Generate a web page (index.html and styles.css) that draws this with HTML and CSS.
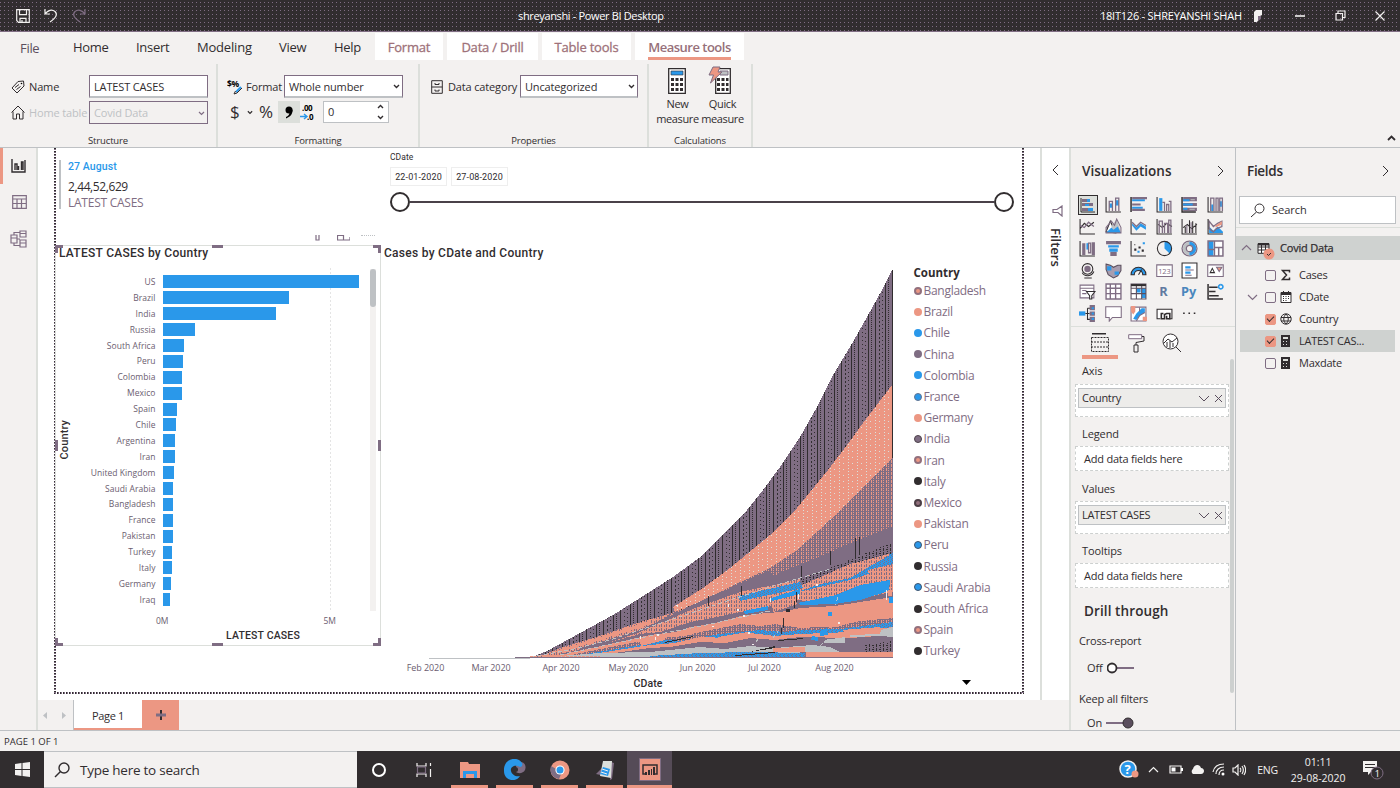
FILE: index.html
```html
<!DOCTYPE html>
<html lang="en">
<head>
<meta charset="utf-8">
<title>shreyanshi - Power BI Desktop</title>
<link rel="stylesheet" href="styles.css">
</head>
<body>
<div class="app">
  <header class="titlebar">
    <div class="quick">
      <svg width="14" height="14" viewBox="0 0 14 14"><path class="lw" d="M.7.7h12.6v12.6H2.5L.7 11.500zM3.500.7v5h7v-5M4 13.300v-4h6v4M6 11v2"/></svg>
      <svg width="14" height="15" viewBox="0 0 14 15"><path class="lw" d="M1 1v5h5M1 6C4 2 8 1 11 3.500c3 3 1 6-5 10.500"/></svg>
      <svg width="14" height="15" viewBox="0 0 14 15"><path class="lp" d="M13 1v5H8M13 6C10 2 6 1 3 3.500c-3 3-1 6 5 10.500"/></svg>
    </div>
    <div class="doc-name">shreyanshi - Power BI Desktop</div>
    <div class="account">18IT126 - SHREYANSHI SHAH</div>
    <div class="window-controls">
      <svg width="10" height="14" viewBox="0 0 10 14"><path fill="#f3f1f0" d="M1 3l2-2h6v5L7 7v2L4 13H1z"/><path fill="#7f6d83" d="M5 7h3v3l-3 2z"/></svg>
      <svg width="10" height="10" viewBox="0 0 10 10"><path class="lw2" d="M0 5h10"/></svg>
      <svg width="11" height="11" viewBox="0 0 11 11"><path class="lw" d="M1 3.500h6.500V10H1zM3 3.500V1h7v6.500H7.500"/></svg>
      <svg width="10" height="10" viewBox="0 0 10 10"><path class="lw" d="M.5.5l9 9M9.500.5l-9 9"/></svg>
    </div>
  </header>

  <nav class="tabs">
    <span class="tab file">File</span><span class="tab home">Home</span><span class="tab insert">Insert</span><span class="tab modeling">Modeling</span><span class="tab view">View</span><span class="tab help">Help</span>
    <span class="ctx format">Format</span><span class="ctx drill">Data / Drill</span><span class="ctx table">Table tools</span><span class="ctx measure"><b>Measure tools</b></span>
  </nav>

  <section class="ribbon">
    <div class="group structure">
      <div class="fields-grid">
        <svg width="14" height="14" viewBox="0 0 14 14"><path class="ld" d="M7 1.500l5.500-.5.500 5-7 7-5-5zM4 7.500l4-3M5.500 9.500l4-3"/><circle cx="10.500" cy="3.500" r=".8"/></svg>
        <span class="lbl">Name</span><span class="input">LATEST CASES</span>
        <svg width="14" height="15" viewBox="0 0 14 15"><path class="ld" d="M.5 7.500L7 1l6.500 6.500M2 6.500V14h3.500V9h3v5H12V6.500"/></svg>
        <span class="lbl off">Home table</span><span class="input off purple">Covid Data<svg width="7" height="5" viewBox="0 0 7 5"><path class="lp" d="M1 1l2.500 2.500L6 1"/></svg></span>
      </div>
      <div class="caption">Structure</div>
    </div>
    <div class="group formatting">
      <div class="fmt-row">
        <svg width="16" height="17" viewBox="0 -2 16 17"><text class="tiny-bold" x="0" y="7">$%</text><path stroke="#2a98ea" stroke-width="2" d="M14 7l-5 5"/><path class="ld" d="M8.500 11l-1.500 3 3-1 5-5"/></svg>
        <span class="lbl">Format</span><span class="input select">Whole number<svg width="7" height="5" viewBox="0 0 7 5"><path class="ld2" d="M1 1l2.500 2.500L6 1"/></svg></span>
      </div>
      <div class="num-row">
        <span class="sym dollar">$</span><svg width="6" height="5" viewBox="0 0 7 5"><path class="ld2" d="M1 1l2.500 2.500L6 1"/></svg>
        <span class="sym percent">%</span>
        <span class="comma"><svg width="8" height="13" viewBox="0 0 8 13"><circle cx="4" cy="4" r="3.500"/><path d="M7.500 3.500C8 8 5 11 1 12.500V11c2-1 3.500-2 3.500-5z"/></svg></span>
        <svg width="16" height="20" viewBox="0 0 16 20"><text class="dec" x="2" y="9">.00</text><text class="dec" x="7" y="17.500">.0</text><path stroke="#2a98ea" fill="none" stroke-width="1.400" d="M0 14.500h7M4 12l3 2.500L4 17"/></svg>
        <span class="stepper">0<svg width="7" height="16" viewBox="0 0 7 16"><path class="ld2" d="M1 4l2.500-2.500L6 4M1 12l2.500 2.500L6 12"/></svg></span>
      </div>
      <div class="caption">Formatting</div>
    </div>
    <div class="group properties">
      <div class="fmt-row">
        <svg width="12" height="14" viewBox="0 0 12 14"><path class="ld" d="M.7.7h10.600v12.600H.7zM.7 7h10.600M4 3v1.500h4V3M4 9.500V11h4V9.500"/></svg>
        <span class="lbl">Data category</span><span class="input select">Uncategorized<svg width="7" height="5" viewBox="0 0 7 5"><path class="ld2" d="M1 1l2.500 2.500L6 1"/></svg></span>
      </div>
      <div class="caption">Properties</div>
    </div>
    <div class="group calc">
      <div class="calc-row">
        <div class="big-btn"><svg width="26" height="30" viewBox="0 0 26 30"><path fill="#fff" stroke="#312d2f" stroke-width="1.300" d="M3.700 2.700h16.600v24.600H3.700z"/><path fill="#2a98ea" stroke="#312d2f" stroke-width=".6" d="M6 5h12v4H6z"/><path stroke="#312d2f" stroke-width="3" stroke-dasharray="3 1.500" d="M6 13.500h12M6 18.500h12M6 23.500h12"/></svg>New<br>measure</div>
        <div class="big-btn"><svg width="26" height="30" viewBox="0 0 26 30"><path fill="#fff" stroke="#312d2f" stroke-width="1.300" d="M5.700 2.700h14.600v24.600H5.700z"/><path fill="#bec1c4" stroke="#7f6d83" d="M10 5h8v4h-8z"/><path stroke="#312d2f" stroke-width="3" stroke-dasharray="3 1.500" d="M7 13.500h11.500M7 18.500h11.500M7 23.500h11.500"/><path fill="#ec9783" stroke="#7f6d83" d="M3 1h7L8 6h4L.5 17l3-8H-1z"/></svg>Quick<br>measure</div>
      </div>
      <div class="caption">Calculations</div>
    </div>
    <svg class="collapse" width="9" height="6" viewBox="0 0 9 6"><path fill="none" stroke="#312d2f" stroke-width="1.800" d="M1 5l3.500-3.500L8 5"/></svg>
  </section>

  <main class="workspace">
    <aside class="rail">
      <div class="rail-item active"><svg width="15" height="14" viewBox="0 0 15 14"><path fill="none" stroke="#312d2f" stroke-width="1.400" d="M1 0v13h13V1M4 11V5h2v6M7.500 11V7M10.500 11V3h1.500v8"/></svg></div>
      <div class="rail-item"><svg width="15" height="14" viewBox="0 0 15 14"><path class="lp" d="M.7.7h13.600v12.600H.7zM.7 4h13.600M.7 8.500h13.600M5 4v9M9.500 4v9"/></svg></div>
      <div class="rail-item low"><svg width="18" height="18" viewBox="0 0 18 18"><path class="lp" d="M1 5h6v8H1zM1 8h6M10 1h6v6h-6zM10 3.500h6M10 10h6v7h-6zM10 13h6M4 5V2.500h6M4 13v2.500h6M7 9h3"/></svg></div>
    </aside>

    <div class="center">
      <div class="report-row">
        <div class="report-area">
          <div class="page">
            <div class="page-top">
              <div class="card"><span class="card-date">27 August</span><span class="card-value">2,44,52,629</span><span class="card-label">LATEST CASES</span></div>
              <div class="slicer">
                <div class="slicer-name">CDate</div>
                <div class="dates"><span>22-01-2020</span><span>27-08-2020</span></div>
                <div class="track"><i></i><b></b><i></i></div>
              </div>
            </div>
            <div class="hover-tools">
              <svg width="5" height="6" viewBox="0 0 5 6"><path class="lp" d="M1 0v5h3V0"/></svg>
              <svg width="13" height="6" viewBox="0 0 13 6"><path class="lp" d="M.5.5h6V5h-6zM7 5h6V2"/></svg>
              <span></span>
            </div>
            <div class="visuals">
              <section class="visual bars selected">
                <h2>LATEST CASES by Country</h2>
                <div class="bar-body">
                  <div class="y-title"><span>Country</span></div>
                  <div class="bar-plot">
                    <div class="row"><span>US</span><i style="width:196.500px"></i></div>
                    <div class="row"><span>Brazil</span><i style="width:126px"></i></div>
                    <div class="row"><span>India</span><i style="width:113.500px"></i></div>
                    <div class="row"><span>Russia</span><i style="width:32.500px"></i></div>
                    <div class="row"><span>South Africa</span><i style="width:21px"></i></div>
                    <div class="row"><span>Peru</span><i style="width:20.500px"></i></div>
                    <div class="row"><span>Colombia</span><i style="width:19.500px"></i></div>
                    <div class="row"><span>Mexico</span><i style="width:19.500px"></i></div>
                    <div class="row"><span>Spain</span><i style="width:14.500px"></i></div>
                    <div class="row"><span>Chile</span><i style="width:13.500px"></i></div>
                    <div class="row"><span>Argentina</span><i style="width:12.500px"></i></div>
                    <div class="row"><span>Iran</span><i style="width:12.500px"></i></div>
                    <div class="row"><span>United Kingdom</span><i style="width:11.500px"></i></div>
                    <div class="row"><span>Saudi Arabia</span><i style="width:10.500px"></i></div>
                    <div class="row"><span>Bangladesh</span><i style="width:10.500px"></i></div>
                    <div class="row"><span>France</span><i style="width:10px"></i></div>
                    <div class="row"><span>Pakistan</span><i style="width:10px"></i></div>
                    <div class="row"><span>Turkey</span><i style="width:9px"></i></div>
                    <div class="row"><span>Italy</span><i style="width:9px"></i></div>
                    <div class="row"><span>Germany</span><i style="width:8.500px"></i></div>
                    <div class="row"><span>Iraq</span><i style="width:7.500px"></i></div>
                  </div>
                  <div class="scroll"><i></i></div>
                </div>
                <div class="bar-axis"><span>0M</span><span>5M</span></div>
                <div class="x-title">LATEST CASES</div>
                <i class="h tl"></i><i class="h tm"></i><i class="h tr"></i><i class="h ml"></i><i class="h mr"></i><i class="h bl"></i><i class="h bm"></i><i class="h br"></i>
              </section>

              <section class="visual ribbon-chart">
                <h2>Cases by CDate and Country</h2>
                <div class="ribbon-body">
                  <div class="plot">
                    <svg width="515" height="395" viewBox="380 265 515 395" shape-rendering="crispEdges">
                      <defs>
                        <pattern id="us" width="34" height="4" patternUnits="userSpaceOnUse"><rect width="34" height="4" fill="#7f6d83"/><path fill="#312d2f" d="M1 0h1v4h-1zM4 0h1v1h-1zM4 2h1v1h-1zM8 0h1v4h-1zM12 0h1v1h-1zM15 1h1v1h-1zM18 0h1v4h-1zM21 0h1v1h-1zM21 2h1v1h-1zM25 0h1v4h-1zM29 1h1v2h-1zM32 0h1v1h-1z"/></pattern>
                        <pattern id="br" width="9" height="6" patternUnits="userSpaceOnUse"><rect width="9" height="6" fill="#ec9783"/><path fill="#dcdfdb" d="M2 0h1v1h-1zM2 3h1v1h-1zM6 1h1v1h-1z"/></pattern>
                        <pattern id="in" width="5" height="4" patternUnits="userSpaceOnUse"><rect width="5" height="4" fill="#7f6d83"/><path fill="#ec9783" d="M1 0h1v3h-1zM3 0h1v1h-1zM3 2h1v1h-1z"/></pattern>
                        <pattern id="dk" width="7" height="4" patternUnits="userSpaceOnUse"><rect width="7" height="4" fill="#7f6d83"/><path fill="#312d2f" d="M1 0h1v3h-1zM4 1h2v1h-2zM5 3h1v1h-1z"/></pattern>
                        <pattern id="bp" width="4" height="4" patternUnits="userSpaceOnUse"><rect width="4" height="4" fill="#2a98ea"/><path fill="#7f6d83" d="M0 0h1v1h-1zM2 1h1v1h-1zM0 2h1v1h-1zM3 3h1v1h-1z"/></pattern>
                        <pattern id="co" width="5" height="4" patternUnits="userSpaceOnUse"><rect width="5" height="4" fill="#ec9783"/><path fill="#7f6d83" d="M1 0h1v3h-1zM4 1h1v2h-1z"/></pattern>
                      </defs>
                      <path fill="url(#us)" d="M530 658L547 651 580 633 613 615 640 598 673 577 703 555 730 527 747 510 763 490 780 467 800 437 817 407 833 375 850 347 867 317 883 288 892 270H893V658z"/>
                      <path fill="url(#co)" d="M535 658L563 647 597 637 640 622 673 613 770 575 830 552 893 530V658z"/>
                      <path fill="#ec9783" d="M553 652L597 638 640 624 651 620V624L600 640 560 652z"/>
                      <path fill="url(#in)" d="M657 622L673 612 730 587 770 568 797 550 830 520 857 493 893 458V530L770 577 700 600z"/>
                      <path fill="#7f6d83" d="M580 648L640 630 697 603 730 588 770 570 773 576 830 552 893 526V544L830 568 797 580 740 592 700 606 640 632 580 652z"/>
                      <path fill="url(#br)" d="M673 607L703 588 730 568 770 535 797 508 828 470 850 441 863 423 892 385V458L857 493 830 520 797 550 770 568 730 587 697 603 675 612z"/>
                      <path fill="url(#dk)" d="M800 579L830 568 893 542V553L850 564 800 586z"/>
                      <path fill="#7f6d83" d="M560 654L600 645 640 634 660 632 690 622 712 618 740 612 772 606 797 600 830 604 893 592V658H560z"/>
                      <path fill="#ec9783" d="M560 655L610 644 650 635 675 632 690 627 712 624 745 615 780 612 800 608 835 606 860 602 893 597V658H560z"/>
                      <path fill="url(#in)" d="M570 655L620 645 660 638 685 636 700 632 740 624 760 626 775 624 800 628 838 626 860 621 893 618V658H570z"/>
                      <path fill="url(#bp)" d="M580 655L640 645 665 640 680 641 720 634 760 630 785 632 800 630 840 629 893 622V658H580z"/>
                      <path fill="#ec9783" d="M580 656L650 645 675 643 700 637 730 638 750 633 775 636 800 634 850 632 893 627V658H580z"/>
                      <path fill="#7f6d83" d="M600 655L650 648 670 647 700 642 725 643 750 638 775 640 800 637 850 638 893 635V658H600z"/>
                      <path fill="#bec1c4" d="M560 656L600 653 650 652 700 647 725 649 750 646 775 648 812 645 830 647 840 652 760 653 700 655 650 657H560z"/>
                      <path fill="url(#bp)" d="M650 656L700 653 750 652 805 653V658H650z"/>
                      <path fill="url(#bp)" d="M738 596L800 582 803 588 740 601zM820 584L850 578 893 553V566L850 580 798 592z"/>
                      <path fill="#2a98ea" d="M744 611L768 606V610L745 614zM771 598L800 589V594L772 601zM798 603L836 595 860 585 890 580 889 591 860 600 835 604 800 605zM820 631L827 628 828 635 820 636zM828 612h4v4h-4zM889 597h4v6h-4zM812 636l6 1v4l-7-1z"/>
                      <path fill="url(#co)" d="M868 570L893 564V579L870 581zM772 603L797 596 797 604 773 612z"/>
                      <path fill="#ec9783" d="M842 630L880 627V634L850 636zM806 652H893V658H806zM773 648L805 647V652H773zM888 590h4v6h-4zM829 621l12-1v6l-12 2zM640 641l25-6v5l-24 6zM718 637l30-5v6l-30 5z"/>
                      <path fill="#bec1c4" d="M881 630L893 627V637L880 636 850 637V635L880 634zM825 640L845 637V643L824 643z"/>
                      <path fill="url(#dk)" d="M865 645L893 641V652H865z"/>
                      <path fill="#312d2f" d="M855 538h1v20h-1zM859 537h1v18h-1zM741 586h1v10h-1zM801 566h1v14h-1zM830 551h1v14h-1zM708 596h1v10h-1zM786 609h4v3h-4zM783 618h1v10h-1zM781 628h1v6h-1zM796 592h1v10h-1zM794 601h1v7h-1zM750 652l25-6v2zM665 642l28-6v1l-28 6zM735 655l40-3v1l-40 3zM778 640l25-2v1l-25 2z"/>
                      <path fill="none" stroke="#bec1c4" stroke-dasharray="4 3" d="M530 657L570 650 610 640 655 625 712 606 770 587 830 569M560 655L640 638 706 625 770 611M756 642l3-4M838 597l-3 8M773 638l5-7M820 646l8-7"/>
                      <path fill="#f3f1f0" d="M676 605h2v1h-2zM737 609h2v2h-2zM770 598h1v4h-1zM798 594h1v5h-1zM838 622h2v2h-2zM743 615h2v2h-2zM657 634h2v2h-2zM748 632h2v2h-2zM816 584h2v2h-2zM886 590h1v10h-1zM640 636h1v3h-1zM655 637h1v3h-1zM712 626h2v1h-2zM728 604h1v3h-1zM752 644h2v1h-2z"/>
                      <path stroke="#bec1c4" d="M429 658.500H530"/><path stroke="#7f6d83" d="M515 657.500H893"/>
                      <path stroke="#ec9783" stroke-dasharray="3 1" d="M530 656.500H600"/>
                    </svg>
                    <div class="months"><span>Feb 2020</span><span>Mar 2020</span><span>Apr 2020</span><span>May 2020</span><span>Jun 2020</span><span>Jul 2020</span><span>Aug 2020</span></div>
                    <div class="x-title">CDate</div>
                  </div>
                  <div class="legend">
                    <h3>Country</h3>
                    <div><i class="mc"></i>Bangladesh</div><div><i class="c"></i>Brazil</div><div><i class="b"></i>Chile</div><div><i class="p"></i>China</div><div><i class="b"></i>Colombia</div><div><i class="mb"></i>France</div><div><i class="c"></i>Germany</div><div><i class="md"></i>India</div><div><i class="mc"></i>Iran</div><div><i class="d"></i>Italy</div><div><i class="mr"></i>Mexico</div><div><i class="c"></i>Pakistan</div><div><i class="mb dark"></i>Peru</div><div><i class="d"></i>Russia</div><div><i class="mb dark"></i>Saudi Arabia</div><div><i class="d"></i>South Africa</div><div><i class="mc"></i>Spain</div><div><i class="d"></i>Turkey</div>
                    <svg width="9" height="5" viewBox="0 0 9 5"><path d="M0 0h9L4.500 5z"/></svg>
                  </div>
                </div>
              </section>
            </div>
          </div>
        </div>
        <aside class="filters">
          <svg width="7" height="12" viewBox="0 0 7 12"><path class="ld" d="M6 1L1 6l5 5"/></svg>
          <svg width="11" height="12" viewBox="0 0 11 12"><path class="lp" d="M10 1v10L6 7.500H1v-3h4z"/></svg>
          <span>Filters</span>
        </aside>
      </div>
      <div class="page-tabs">
        <span class="arrows"><svg width="4" height="7" viewBox="0 0 4 7"><path fill="#bec1c4" d="M4 0v7L0 3.500z"/></svg><svg width="4" height="7" viewBox="0 0 4 7"><path fill="#bec1c4" d="M0 0v7l4-3.500z"/></svg></span>
        <span class="page-tab">Page 1</span>
        <span class="add"><svg width="10" height="10" viewBox="0 0 10 10"><path stroke="#312d2f" stroke-width="2" d="M5 0v10"/><path stroke="#7f6d83" stroke-width="3" d="M0 5h10"/></svg></span>
      </div>
    </div>

    <aside class="viz">
      <div class="pane-head"><span>Visualizations</span><svg width="7" height="12" viewBox="0 0 7 12"><path class="ld" d="M1 1l5 5-5 5"/></svg></div>
      <div class="icon-grid">
        <svg class="sel" viewBox="0 0 16 16"><path class="ld" d="M1 1v14h14"/><path class="p" d="M2 2h6v3H2zM2 6h11v3H2zM2 11h6v3H2z"/><path class="b" d="M7 2h3v3H7zM5 7h4v2H5zM8 11h5v3H8z"/></svg>
        <svg viewBox="0 0 16 16"><path class="ld" d="M1 1v14h14"/><path class="b" d="M4 7h3v4H4zM10 4h3v5h-3z"/><path class="lp" d="M4 14V5h3v9M10 14V2h3v12"/></svg>
        <svg viewBox="0 0 16 16"><path class="ld2" d="M1 1v14"/><path class="b" d="M2 3h12v2H2zM2 10h10v2H2z"/><path class="p" d="M2 1h14v2H2zM2 7h8v2H2zM2 12h12v2H2z"/></svg>
        <svg viewBox="0 0 16 16"><path class="ld" d="M1 1v14h14"/><path class="b" d="M3 2h3v12H3z"/><path class="lp" d="M6 6h2v8M10 14V8h2v6M12 5h2v9"/></svg>
        <svg viewBox="0 0 16 16"><path class="ld2" d="M1 1v14h13"/><path class="p" d="M2 1h13v4H2zM2 6.500h13v3H2zM2 11h13v3H2z"/><path class="b" d="M2 3h6v2H2zM2 7h9v2H2zM2 11h4v2H2z"/><path class="g" d="M9 3h4v1H9zM8 12h5v1H8z"/></svg>
        <svg viewBox="0 0 16 16"><path class="ld" d="M1 1v14h14"/><path class="b" d="M4 8h2v6H4zM12 5h2v5h-2z"/><path class="lp" d="M3.500 14V2h3v12M8.500 14V2h2v12M12 14V2h2.500v12"/></svg>

        <svg viewBox="0 0 16 16"><path class="ld" d="M1 1v14h14M1 10l4-5 4 3 5-4"/><path class="lp" d="M1 7l4 2 4-5 5 4"/></svg>
        <svg viewBox="0 0 16 16"><path fill="#fff" class="ldf" d="M1 13l4-10 5 11z"/><path class="g" d="M6 8l5-7 4 13H8z"/><path class="b" d="M2 13l4-4 2 2 4-3 3 6H1z"/><path fill="none" class="lpf" d="M1 14V9l5-6 3 4 2-6 4 8v5z"/></svg>
        <svg viewBox="0 0 16 16"><path class="b" d="M2 5l4 4 4-4 5 3v3l-5-3-4 4-4-5z"/><path class="ld" d="M1 1v14h14"/><path class="lp" d="M2 4l4 4 4-4 5 3"/></svg>
        <svg viewBox="0 0 16 16"><path class="ld" d="M1 1v14h14M2 6l4 3 4-4 5 3"/><path class="lp" d="M3 14V3h3v11M8 14V5h3v9M12 14V2h2v12"/></svg>
        <svg viewBox="0 0 16 16"><path class="ld" d="M1 1v14h14M2 9l4-3 4 4 5-4M4 7v7M8 2v12M11 3v11M14 5v9"/><path class="p" d="M5 7h1v7H5zM9 4h1v10H9z"/></svg>
        <svg viewBox="0 0 16 16"><path class="b" d="M2 8l4 4 4-4 5 5v1H2z"/><path class="lp" d="M2 3l4 5 4-3 4-2v5l-5 2-3 3-4-3z"/><path fill="#ec9783" d="M8 7l6-4v3L8 9z"/><path class="ld" d="M1 1v14h14"/></svg>

        <svg viewBox="0 0 16 16"><path class="ld" d="M1 1v14h14"/><path class="p" d="M3 3h3v11H3zM12 2h3v12h-3z"/><path class="b" d="M7 3h2v6H7z"/><path class="lp" d="M9 3h2v9H9z"/></svg>
        <svg viewBox="0 0 16 16"><path class="p" d="M1 1h14v3H1zM5 11h6v4H5z"/><path class="b" d="M3 5h10v2H3zM4 8h8v3H4z"/></svg>
        <svg viewBox="0 0 16 16"><path class="ld" d="M1 1v14h14"/><path class="d" d="M4 8h2v2H4zM8 6h2v2H8zM4 4h1v1H4zM11 9h2v2h-2z"/><path class="b" d="M12 2h2v2h-2zM7 10h2v2H7z"/></svg>
        <svg viewBox="0 0 16 16"><path class="b" d="M8 1v7l5 5c4-5 1-12-5-12z"/><circle class="ld" cx="8" cy="8" r="6.700"/></svg>
        <svg viewBox="0 0 16 16"><circle class="lp" cx="8" cy="8" r="7"/><circle fill="none" stroke="#bec1c4" stroke-width="3" cx="8" cy="8" r="4.800"/><path fill="none" stroke="#2a98ea" stroke-width="3" d="M8 3.200a4.800 4.800 0 0 1 0 9.600"/><circle class="lp" cx="8" cy="8" r="3"/></svg>
        <svg viewBox="0 0 16 16"><path fill="#fff" d="M1 1h14v14H1z"/><path class="b" d="M1 1h5v14H1z"/><path fill="none" class="lpf" stroke-width="1.400" d="M1 1h14v14H1zM7 1v14M7 7h8M11 7v8M1 9h6"/></svg>

        <svg viewBox="0 0 16 16"><circle class="ld" cx="8" cy="6.500" r="5"/><circle class="p" cx="8" cy="6.500" r="3"/><path class="ld" d="M3 10c2 4 9 4 11-1M5 15h7"/></svg>
        <svg viewBox="0 0 16 16"><path fill="#a89daf" stroke="#5b4f5e" d="M1 2l4 1 3 2 4-2h3v5l-3 5-4 2-5-3-2-5z"/><path class="b" d="M2 4h4v4H2zM9 9h4v3H9z"/></svg>
        <svg viewBox="0 0 16 16"><path fill="none" stroke="#2a98ea" stroke-width="3" d="M2.500 12a5.500 5.500 0 0 1 11 0"/><path class="ld" d="M1 12a7 7 0 0 1 14 0h-3a4 4 0 0 0-8 0zM8 12l3-5"/></svg>
        <svg viewBox="0 0 16 16"><path fill="#fff" class="lpf" d="M.7 2.700h14.600v11H.7z"/><text class="icon-num" x="2" y="11">123</text></svg>
        <svg viewBox="0 0 16 16"><path class="ldf" fill="#fff" d="M1 1h14v14H1z"/><path class="b" d="M4 4h5v2H4zM4 9h5v2H4z"/><path class="p" d="M4 7h8v1H4zM4 12h6v1H4z"/></svg>
        <svg viewBox="0 0 16 16"><path fill="#fff" class="lpf" d="M.7 2.700h14.600v11H.7z"/><path class="ld" d="M3 10l2-4 2 4z"/><path fill="#ec9783" stroke="#7f6d83" d="M9 5h5l-2.500 4z"/></svg>

        <svg viewBox="0 0 16 16"><path class="lpf" fill="#fff" d="M1 2h13v12H1zM1 5h13M3 7h4M3 10h4"/><path class="ldf" fill="#fff" d="M7 8h8l-3 4v3h-2v-3z"/></svg>
        <svg viewBox="0 0 16 16"><path class="lpf" stroke-width="1.300" fill="#fff" d="M1 1h14v14H1zM1 5h14M1 10h14M5 1v14M10 1v14"/></svg>
        <svg viewBox="0 0 16 16"><path fill="#fff" d="M1 1h14v14H1z"/><path class="b" d="M6 5h4v4H6zM11 5h4v9h-4z"/><path fill="none" stroke="#5b4f5e" d="M1 1h14v14H1zM1 5h14M1 10h14M6 1v14M11 1v14"/><path class="d" d="M1 1h14v2H1z"/></svg>
        <svg viewBox="0 0 16 16"><text class="icon-r" x="3" y="12.500">R</text></svg>
        <svg viewBox="0 0 16 16"><text class="icon-py" x="0" y="12">Py</text></svg>
        <svg viewBox="0 0 16 16"><path class="ld2" d="M1 1v14h14M2 4h8M2 8h6M2 12h9"/><path class="lb" d="M13 1.500a2 2 0 1 1-.1 0"/></svg>

        <svg viewBox="0 0 16 16"><path class="b" d="M0 6h6v4H0z"/><path class="ld" d="M6 8h4M8 3v11M8 3h4M8 13.500h4"/><path class="p" d="M10 0h5v5h-5zM10 6h5v4h-5zM10 11h5v5h-5z"/><path class="b" d="M12 2h2v2h-2zM12 7h2v2h-2zM12 12h2v2h-2z"/></svg>
        <svg viewBox="0 0 16 16"><path class="lpf" fill="#fff" d="M.7 1.700h14.600v10H7l-3 3.500v-3.500H.7z"/></svg>
        <svg viewBox="0 0 16 16"><path class="lpf" fill="#fff" d="M1 2h14v13H1z"/><path class="b" d="M3 13l3-5 5-5h3v4l-5 3-3 4z"/><path fill="none" class="lpf" d="M6 15l3-5 5-3M9 2v4"/><path fill="#ec9783" d="M1 1h4v5L3 9 1 6zM12 11h4v4h-4z"/></svg>
        <svg viewBox="0 0 16 16"><path class="ldf" fill="#fff" d="M4 13H1V4h14v9h-3"/><path fill="none" stroke="#312d2f" stroke-width="1.500" d="M7 8H5v5h3V9l2-1h3v5h-3v-3"/></svg>
        <svg viewBox="0 0 16 16"><path fill="#312d2f" d="M2 7h1.500v1.500H2zM7 7h1.500v1.500H7zM12 7h1.500v1.500H12z"/></svg>
      </div>
      <div class="pane-modes">
        <span class="on"><svg width="20" height="20" viewBox="0 0 20 20"><path class="d" d="M2 0h14v1.500H2z"/><path class="ld" stroke-dasharray="2 1" d="M1.500 4.500h17v14h-17zM1 9h18M1 14h18"/></svg></span>
        <span><svg width="18" height="20" viewBox="0 0 18 20"><path class="lpf" fill="#fff" d="M1.700 1.700h13v4h-13z"/><path class="ldf" fill="none" d="M15 3.500h2V8L9 9.500V12M7 12h4v7H7z"/></svg></span>
        <span><svg width="20" height="20" viewBox="0 0 20 20"><circle class="ldf" fill="#fff" cx="8.500" cy="8.500" r="7.500"/><path class="ld" d="M2 10l4-4 4 3 5-4M5 14V9M8 15V8M11 14v-4M14 14l5 5"/></svg></span>
      </div>
      <div class="wells-wrap">
        <div class="wells">
          <div class="well-label axis">Axis</div>
          <div class="well filled"><span>Country<svg width="25" height="9" viewBox="0 0 25 9"><path class="lx" d="M1 2l5 5 5-5M17 1l7 7M24 1l-7 7"/></svg></span></div>
          <div class="well-label">Legend</div>
          <div class="well">Add data fields here</div>
          <div class="well-label values">Values</div>
          <div class="well filled"><span>LATEST CASES<svg width="25" height="9" viewBox="0 0 25 9"><path class="lx" d="M1 2l5 5 5-5M17 1l7 7M24 1l-7 7"/></svg></span></div>
          <div class="well-label tips">Tooltips</div>
          <div class="well">Add data fields here</div>
          <h2 class="drill-head">Drill through</h2>
          <div class="opt">Cross-report</div>
          <div class="toggle">Off<svg width="27" height="12" viewBox="0 0 27 12"><path stroke="#7f6d83" stroke-width="2" d="M10 6h17"/><circle fill="#fff" stroke="#312d2f" stroke-width="1.800" cx="5" cy="6" r="4.500"/></svg></div>
          <div class="opt">Keep all filters</div>
          <div class="toggle last">On<svg width="28" height="12" viewBox="0 0 28 12"><path stroke="#7f6d83" stroke-width="2" d="M0 6h18"/><circle fill="#5b4f5e" stroke="#312d2f" cx="22" cy="6" r="5"/></svg></div>
        </div>
        <div class="pane-scroll"></div>
      </div>
    </aside>

    <aside class="fields">
      <div class="pane-head"><span>Fields</span><svg width="7" height="12" viewBox="0 0 7 12"><path class="ld" d="M1 1l5 5-5 5"/></svg></div>
      <div class="search"><svg width="15" height="15" viewBox="0 0 15 15"><circle class="ld" cx="9.500" cy="5.500" r="4.500"/><path class="ld" d="M6.500 9L1 14"/></svg>Search</div>
      <div class="tree">
        <div class="table-row"><svg width="11" height="7" viewBox="0 0 11 7"><path class="lp" d="M1 6l4.500-4.500L10 6"/></svg><svg width="18" height="18" viewBox="0 0 18 18"><path class="ldf" fill="#fff" d="M1 1.700h11v9.600H1zM1 5h11M1 8h11M4.500 2v9M8.500 2v9"/><path class="d" d="M1 1h11v2.500H1z"/><circle fill="#ec9783" cx="12" cy="12" r="5.500"/><path class="ld" d="M10 12l1.500 1.500L14 11"/></svg>Covid Data</div>
        <div class="field"><i></i><em></em><svg viewBox="0 0 12 12"><path fill="none" stroke="#312d2f" stroke-width="1.500" d="M9.500 3.500v-2h-7l4 4.500-4 4.500h7v-2"/></svg>Cases</div>
        <div class="field"><i><svg width="11" height="7" viewBox="0 0 11 7"><path class="lp" d="M1 1l4.500 4.500L10 1"/></svg></i><em></em><svg viewBox="0 0 12 12"><path class="ldf" fill="#fff" d="M1 1.500h10v10H1zM3.500 0v2M8.500 0v2"/><path class="d" d="M1 2h10v2H1zM3 5h1v1H3zM5.500 5h1v1h-1zM8 5h1v1H8zM3 7h1v1H3zM5.500 7h1v1h-1zM8 7h1v1H8zM3 9h1v1H3zM5.500 9h1v1h-1z"/></svg>CDate</div>
        <div class="field"><i></i><em class="on"></em><svg viewBox="0 0 12 12"><circle class="ld" cx="6" cy="6" r="5.200"/><path class="ld" d="M1 4.500h10M1 8h10M6 1C3 4 3 8 6 11c3-3 3-7 0-10"/></svg>Country</div>
        <div class="field picked"><i></i><em class="on"></em><svg viewBox="0 0 12 12"><path class="d" d="M1 0h9v12H1z"/><path fill="#dcdfdb" d="M3 2h5v2H3zM3 6h1v1H3zM6 6h1v1H6zM3 9h1v1H3zM6 9h1v1H6z"/></svg>LATEST CAS...</div>
        <div class="field"><i></i><em></em><svg viewBox="0 0 12 12"><path class="d" d="M1 0h9v12H1z"/><path fill="#dcdfdb" d="M3 2h5v2H3zM3 6h1v1H3zM6 6h1v1H6zM3 9h1v1H3zM6 9h1v1H6z"/></svg>Maxdate</div>
      </div>
    </aside>
  </main>

  <div class="status">PAGE 1 OF 1</div>

  <footer class="taskbar">
    <div class="start"><svg width="15" height="15" viewBox="0 0 15 15"><path fill="#f3f1f0" d="M0 2l6.500-1v6H0zM7.500 1L15 0v7H7.500zM0 8h6.500v6L0 13zM7.500 8H15v7l-7.500-1z"/></svg></div>
    <div class="task-search"><svg width="16" height="16" viewBox="0 0 16 16"><circle fill="none" stroke="#312d2f" stroke-width="1.400" cx="10" cy="6" r="5"/><path stroke="#312d2f" stroke-width="1.400" d="M6.500 9.500L1 15"/></svg>Type here to search</div>
    <div class="task-icons">
      <span><svg width="16" height="16" viewBox="0 0 16 16"><circle fill="none" stroke="#fff" stroke-width="2" cx="8" cy="8" r="6"/></svg></span>
      <span><svg width="16" height="16" viewBox="0 0 16 16"><path class="lw" d="M1 1v3h9V1M1 15v-3h9v3M14.500 1v3M14.500 7v8"/><path class="lp" d="M1.500 5v6h8V5z"/></svg></span>
      <span class="run"><svg width="20" height="18" viewBox="0 0 20 18"><path fill="#ec9783" d="M0 1h8l1 2h11v14H0z"/><path fill="#2a98ea" d="M3 10h14v7h-3v-4H6v4H3z"/></svg></span>
      <span class="run"><svg width="22" height="21" viewBox="0 0 22 21"><path fill="#7f6d83" d="M13 4c6-3 10 2 8 7-2 4-8 4-10 1z"/><path fill="#2a98ea" d="M0 12C-1 0 13-4 18 4c1 2 0 4-2 4-5-3-10 0-9 4 1 4 5 6 9 5-4 7-16 5-16-5z"/><circle fill="#312d2f" cx="11.500" cy="10.500" r="2.500"/></svg></span>
      <span class="run"><svg width="20" height="20" viewBox="0 0 20 20"><circle fill="#ec9783" cx="10" cy="10" r="9.500"/><path fill="#7f6d83" d="M1 6a9.500 9.500 0 0 0 8 13l3-7-4-2z"/><circle fill="#fff" cx="10" cy="10" r="4.600"/><circle fill="#2a98ea" cx="10" cy="10" r="3.500"/></svg></span>
      <span class="run"><svg width="20" height="20" viewBox="0 0 20 20"><path fill="#7f6d83" d="M1 14l8-8 1 10zM16 2l3 1-2 16-2 1z"/><path fill="#dcdfdb" d="M8 1h9l-1 17-11-2z"/><path fill="#2a98ea" d="M8 7l7 2-2 7-8-2z"/><path stroke="#f3f1f0" d="M7 9l6 2M6 12l6 2"/></svg></span>
      <span class="run current"><svg width="22" height="23" viewBox="0 0 22 23"><path fill="#ec9783" stroke="#7f6d83" d="M.5.5h21v22H.5z"/><path fill="none" stroke="#312d2f" stroke-width="1.500" d="M6 16H4V7h14v9h-2"/><path fill="#312d2f" d="M6 14h2v3H6zM9 12h2v5H9zM12 11h1v6h-1zM14 9h2v8h-2z"/></svg></span>
    </div>
    <div class="tray">
      <svg width="20" height="19" viewBox="0 0 20 19"><circle fill="#2a98ea" stroke="#f3f1f0" stroke-width="1.500" cx="9" cy="9" r="8"/><text class="q" x="5.500" y="14">?</text><circle fill="#ec9783" cx="16" cy="14" r="3.500"/></svg>
      <svg width="11" height="7" viewBox="0 0 11 7"><path class="lw" d="M1 6l4.500-4.500L10 6"/></svg>
      <svg width="14" height="9" viewBox="0 0 14 9"><path class="lw" d="M1 1h11v7H1z"/><path fill="#fff" d="M2.500 2.500h4v4h-4zM12 3h2v3h-2z"/></svg>
      <svg width="14" height="9" viewBox="0 0 14 9"><path fill="#f3f1f0" d="M3 9a3 3 0 0 1 0-5c1-5 7-5 8-1 4 0 4 6 0 6z"/></svg>
      <svg width="13" height="13" viewBox="0 0 13 13"><path class="lw" d="M1 9C2 4 6 1 12 1M4 11c0-4 3-7 8-7M7 12c0-3 2-5 5-5"/><circle fill="#fff" cx="11" cy="11" r="1.500"/></svg>
      <svg width="14" height="12" viewBox="0 0 14 12"><path class="lw" d="M1 4h2l3-3v10L3 8H1zM8 4c1 1 1 3 0 4M10 2c2 3 2 5 0 8M12 1c2 3 2 7 0 10"/></svg>
      <span class="lang">ENG</span>
      <span class="clock">01:11<br>29-08-2020</span>
      <span class="notify"><svg width="22" height="20" viewBox="0 0 22 20"><path fill="#f3f1f0" d="M1 1h14v11H9l-3 3v-3H1z"/><path stroke="#312d2f" d="M3 4.500h10M3 7.500h10"/><circle fill="#312d2f" stroke="#7f6d83" cx="15" cy="13" r="6"/><text class="badge" x="12.800" y="16.500">1</text></svg></span>
    </div>
  </footer>
</div>
</body>
</html>
```
FILE: styles.css
```css
* { box-sizing: border-box; }
body { margin: 0; font-family: "Open Sans", "Noto Sans", sans-serif; color: #312d2f; font-size: 11px; line-height: 16px; background: #f3f1f0; }
svg { flex: none; display: block; }
i, em { font-style: normal; }
h2, h3 { margin: 0; }
.ld { fill: none; stroke: #312d2f; }
.ld2 { fill: none; stroke: #312d2f; stroke-width: 1.4; }
.lp { fill: none; stroke: #7f6d83; stroke-width: 1.2; }
.lx { fill: none; stroke: #5b4f5e; }
.lw { fill: none; stroke: #f3f1f0; stroke-width: 1.2; }
.lw2 { stroke: #f3f1f0; stroke-width: 1.6; }
.lb { fill: none; stroke: #2a98ea; stroke-width: 1.5; }
.ldf { stroke: #312d2f; }
.lpf { stroke: #7f6d83; }
.p { fill: #7f6d83; }
.b { fill: #2a98ea; }
.g { fill: #bec1c4; }
.d { fill: #312d2f; }
.app { width: 1400px; height: 788px; overflow: hidden; display: grid; grid-template-rows: 33px 27px 88px 583px 20px 37px; }

/* title bar */
.titlebar { display: grid; grid-template-columns: 504px 582px 158px 1fr; align-items: center; height: 32px; padding-left: 14px; color: #fff; border-bottom: 1px solid #7f6d83; background: radial-gradient(circle at .5px .5px, #7f6d83 .5px, transparent .6px) 0 2px / 4px 4px, #312d2f; font-size: 11px; }
.quick { display: flex; gap: 14px; padding-left: 2px; align-items: center; }
.doc-name { white-space: nowrap; letter-spacing: -.35px; }
.account { white-space: nowrap; letter-spacing: -.23px; }
.window-controls { display: flex; align-items: center; justify-content: space-between; padding-right: 15px; }
.window-controls svg:first-child { margin-left: -5px; }
.window-controls svg:nth-child(2) { margin-left: 3px; }

/* ribbon tabs */
.tabs { display: flex; font-size: 13px; line-height: 28px; letter-spacing: -.3px; }
.tab { white-space: nowrap; }
.file { width: 73px; padding: 1px 0 0 20px; color: #5b4f5e; }
.home { width: 63px; }
.insert { width: 61px; }
.modeling { width: 82px; letter-spacing: -.2px; }
.view { width: 55px; }
.help { width: 41px; }
.ctx { height: 27px; margin-right: 4px; background: #fff; text-align: center; color: #96707a; -webkit-text-stroke: .3px #a8747a; white-space: nowrap; letter-spacing: -.2px; }
.format { width: 68px; }
.drill { width: 91px; }
.table { width: 89px; }
.measure { width: 109px; }
.measure b { display: inline-block; height: 27px; line-height: 28px; font-weight: 600; letter-spacing: -.5px; border-bottom: 3px solid #ec9783; -webkit-text-stroke: 0; }

/* ribbon */
.ribbon { display: grid; grid-template-columns: 218px 202px 229px 104px 1fr; border-bottom: 1px solid #bec1c4; }
.group { display: flex; flex-direction: column; margin-top: 4px; height: 83px; border-right: 2px solid #dcdfdb; }
.caption { margin-top: auto; text-align: center; font-size: 9.5px; line-height: 12px; letter-spacing: -.15px; }
.fields-grid { display: grid; grid-template-columns: 18px 60px 119px; grid-template-rows: 23px 23px; row-gap: 3px; padding: 11px 0 0 11px; align-items: center; }
.lbl { font-size: 11px; white-space: nowrap; letter-spacing: -.15px; }
.off { color: #bec1c4; }
.input { display: flex; align-items: center; justify-content: space-between; height: 23px; padding: 1px 2px 0 4px; background: #fff; border: 1px solid #7f6d83; border-bottom: 2px solid #bec1c4; font-size: 11px; white-space: nowrap; letter-spacing: -.15px; }
.purple { border-bottom: 1px solid #7f6d83; background: #f3f1f0; }
.fmt-row { display: flex; align-items: center; padding: 11px 0 0 9px; height: 34px; }
.fmt-row .lbl { margin-left: 3px; }
.formatting .lbl { width: 38px; }
.formatting .input { width: 119px; }
.properties .fmt-row { padding-left: 11px; }
.properties .lbl { width: 72px; margin-left: 5px; }
.properties .input { width: 118px; }
.num-row { display: flex; align-items: center; margin: 3px 0 0 12px; height: 22px; }
.sym { font-size: 17px; }
.dollar { width: 17px; }
.percent { width: 18px; margin-left: 6px; letter-spacing: -1px; margin-right: 1px; }
.comma { display: flex; width: 22px; height: 22px; align-items: center; justify-content: center; background: #dcdfdb; }
.dec { font: bold 8px "Open Sans", sans-serif; letter-spacing: -.4px; }
.tiny-bold { font: bold 8.5px "Open Sans", sans-serif; letter-spacing: -.3px; }
.stepper { display: flex; align-items: center; justify-content: space-between; width: 66px; height: 22px; margin-left: 7px; padding: 0 4px; background: #fff; border: 1px solid #bec1c4; }
.calc-row { display: flex; padding: 0 7px; gap: 2px; margin-top: 2px; }
.big-btn { width: 43px; display: flex; flex-direction: column; align-items: center; font-size: 11px; line-height: 14.5px; text-align: center; letter-spacing: -.35px; }
.big-btn svg { margin-bottom: 1px; overflow: visible; }
.collapse { justify-self: end; align-self: end; margin: 0 4px 6px 0; }

/* workspace */
.workspace { display: grid; grid-template-columns: 38px 1033px 165px 164px; min-height: 0; border-bottom: 1px solid #bec1c4; }
.rail { border-right: 2px solid #dcdfdb; }
.rail-item { display: flex; align-items: center; justify-content: center; height: 36px; padding-left: 2px; }
.rail-item.low { padding-top: 2px; }
.rail-item.active { border-left: 3px solid #ec9783; padding-left: 0; padding-right: 2px; }
.center { display: grid; grid-template-rows: 552px 30px; min-width: 0; }
.report-row { display: grid; grid-template-columns: 1004px 29px; background: #fff; }
.report-area { padding-left: 16px; border-right: 2px solid #dcdfdb; }
.page {
  width: 970px; height: 546px; border: solid transparent; border-width: 0 2px 2px;
  background:
    repeating-linear-gradient(#312d2f 0 1px, #7f6d83 1px 2px, transparent 2px 3px) left top / 2px 100% no-repeat border-box,
    repeating-linear-gradient(#312d2f 0 1px, #7f6d83 1px 2px, transparent 2px 3px) right top / 2px 100% no-repeat border-box,
    repeating-linear-gradient(90deg, #312d2f 0 1px, #7f6d83 1px 2px, transparent 2px 3px) left bottom / 100% 2px no-repeat border-box;
}
.page-top { display: flex; height: 85px; }
.card { display: flex; flex-direction: column; width: 333px; height: 49px; margin: 12px 0 0 3px; padding-left: 7px; border-left: 2px solid #bec1c4; }
.card-date { margin-top: -1px; color: #2a98ea; font: 500 10.5px/15px Roboto, sans-serif; letter-spacing: .1px; }
.card-value { font-size: 12px; line-height: 16px; margin-top: 5px; letter-spacing: -.4px; }
.card-label { font-size: 12px; line-height: 16px; color: #7f6d83; letter-spacing: -.25px; }
.slicer { width: 628px; padding-top: 3px; margin-left: -2px; }
.slicer-name { font: 8.5px/12px Roboto, sans-serif; letter-spacing: .05px; height: 12px; }
.dates { display: flex; gap: 4px; margin-top: 4px; }
.dates span { width: 57px; height: 19px; border: 1px solid #eee; text-align: center; font: 9px/18px Roboto, sans-serif; letter-spacing: .12px; }
.track { display: flex; align-items: center; margin-top: 6px; }
.track i { width: 20px; height: 20px; border: 2px solid #312d2f; border-radius: 50%; }
.track b { width: 584px; height: 2px; background: #4a4149; }
.hover-tools { display: flex; gap: 17px; padding: 2px 0 0 259px; height: 12px; }
.hover-tools span { width: 14px; height: 1px; border-top: 1px dotted #bec1c4; margin-left: -6px; }
.visuals { display: grid; grid-template-columns: 325px 1fr; }
.visual { position: relative; height: 401px; min-width: 0; }
.visual h2 { font: 500 12px/15px Roboto, sans-serif; letter-spacing: .28px; white-space: nowrap; }
.bars { border: 1px solid #dcdfdb; margin-left: -1px; width: 326px; }
.bars h2 { padding-left: 3px; }
.bar-body { display: grid; grid-template-columns: 16px 298px 6px; height: 350px; padding-top: 7px; }
.y-title { display: flex; align-items: center; justify-content: center; font: 500 11px/14px Roboto, sans-serif; padding-left: 2px; padding-top: 1px; }
.y-title span { writing-mode: vertical-rl; transform: rotate(180deg); letter-spacing: .1px; }
.bar-plot { padding-top: 6px; background: linear-gradient(#e4e4e4 50%, transparent 50%) 257.5px 0 / 1px 4px repeat-y; }
.row { display: grid; grid-template-columns: 83.5px 1fr; column-gap: 7px; height: 15.9px; align-items: center; text-align: right; }
.row span { font-size: 8.5px; line-height: 14px; color: #6b5d6f; white-space: nowrap; letter-spacing: .05px; }
.row i { display: block; height: 13px; background: #2a98ea; }
.scroll { background: #f3f1f0; margin-top: 1px; }
.scroll i { display: block; height: 38px; border-radius: 3px; background: #bec1c4; }
.bar-axis { display: flex; justify-content: space-between; padding: 2px 44px 0 100px; font-size: 8.5px; line-height: 15px; color: #6b5d6f; }
.x-title { font: 500 10.5px/14px Roboto, sans-serif; text-align: center; }
.bars .x-title { padding: 1px 0 0 90px; letter-spacing: .15px; }
.h { position: absolute; width: 8px; height: 4px; border: solid #7f6d83; border-width: 0; background: transparent; }
.tl, .bl { left: -1px; border-left-width: 3px; }
.tr, .br { right: -1px; border-right-width: 3px; }
.tl, .tr { top: -1px; height: 8px; border-top-width: 3px; }
.bl, .br { bottom: -1px; height: 8px; border-bottom-width: 3px; }
.tm, .bm { left: 156px; width: 11px; border-top-width: 3px; }
.tm { top: -1px; }
.bm { bottom: -2px; }
.h.ml, .h.mr { top: 194px; width: 3px; height: 11px; background: #7f6d83; }
.h.ml { left: -1px; }
.h.mr { right: -1px; }
.ribbon-chart { padding: 1px 0 0 3px; }
.ribbon-body { display: grid; grid-template-columns: 512px 1fr; }
.plot { margin-left: -4px; padding-top: 4px; width: 515px; }
.months { display: grid; grid-template-columns: 65px 66px 74px 61px 77px 57px 83px; padding-left: 13px; font-size: 9px; line-height: 15px; height: 14px; color: #6b5d6f; text-align: center; letter-spacing: -.08px; }
.plot .x-title { padding: 2px 0 0 21px; line-height: 15px; letter-spacing: .15px; }
.legend { padding: 5px 0 0 17.5px; font-size: 12px; line-height: 21.2px; color: #7f6d83; }
.legend h3 { font: 700 11.5px/14px "Open Sans", sans-serif; color: #312d2f; }
.legend div { display: flex; align-items: center; gap: 2px; white-space: nowrap; letter-spacing: -.28px; }
.legend div i { width: 8px; height: 8px; border-radius: 50%; }
.legend svg { margin: 18px 0 0 48px; }
.c { background: #ec9783; }
.legend .p { background: #7f6d83; }
.legend .b { background: #2a98ea; }
.legend .d { background: #312d2f; }
.mc { background: #ec9783; border: 2px solid #92707d; }
.legend .mr { background: #92707d; border: 2px solid #4c3e45; }
.md { background: #7f6d83; border: 1.5px solid #4c4149; }
.mb { background: #2a98ea; border: 1.5px solid #627390; }
.mb.dark { border-color: #3f526b; }
.filters { display: flex; flex-direction: column; align-items: center; padding-top: 16px; border-right: 2px solid #dcdfdb; }
.filters svg + svg { margin-top: 29px; margin-left: 3px; }
.filters span { writing-mode: vertical-rl; font: 600 13px/16px "Open Sans", sans-serif; margin-top: 11px; margin-left: 1px; letter-spacing: 0; }
.page-tabs { display: flex; border-right: 2px solid #dcdfdb; }
.arrows { width: 36px; display: flex; align-items: center; justify-content: space-between; padding: 0 7px 0 5px; border-right: 1px solid #bec1c4; }
.page-tab { width: 68px; background: #fff; border-bottom: 2px solid #ec9783; text-align: center; line-height: 31px; letter-spacing: -.3px; }
.add { width: 37px; display: flex; align-items: center; justify-content: center; background: #ec9783; }

/* visualizations */
.viz { border-right: 1px solid #bec1c4; overflow: hidden; letter-spacing: -.1px; }
.pane-head { display: flex; align-items: center; justify-content: space-between; height: 46px; padding: 0 11px; font: 600 13.5px/20px "Open Sans", sans-serif; letter-spacing: 0; }
.icon-grid { display: grid; grid-template-columns: repeat(6, 25.5px); grid-auto-rows: 21.75px; padding-left: 4px; height: 132px; justify-items: center; align-items: center; }
.icon-grid svg { width: 17px; height: 17px; }
.icon-grid .sel { width: 20px; height: 20px; padding: 1px; background: #dcdfdb; border: 1px solid #312d2f; }
.icon-num { font: 7px "Open Sans", sans-serif; fill: #7f6d83; letter-spacing: 0; }
.icon-r { font: bold 12px "Open Sans", sans-serif; fill: #6079a0; }
.icon-py { font: bold 12px "Open Sans", sans-serif; fill: #4a86bd; letter-spacing: 0; }
.pane-modes { display: flex; height: 33px; border-top: 1px solid #dcdfdb; padding-left: 11px; }
.pane-modes span { width: 36px; display: flex; justify-content: center; padding-top: 6px; }
.pane-modes .on { border-bottom: 4px solid #ec9783; }
.wells-wrap { display: grid; grid-template-columns: 159px 4px; justify-content: start; }
.pane-scroll { height: 334px; background: #cdd0cf; border-radius: 2px; }
.wells { padding-left: 4px; }
.well-label { height: 29px; padding: 8px 0 0 7px; line-height: 17px; }
.well-label.axis { height: 25px; padding-top: 3px; }
.well { height: 25px; background: #fff; border: 1px dashed #cdd0cf; padding-left: 8px; line-height: 24px; margin: 0 1px 1px 0; white-space: nowrap; letter-spacing: -.22px; }
.well.filled { height: 33px; padding: 3px 2px; margin-bottom: 0; }
.well.filled span { display: flex; align-items: center; justify-content: space-between; height: 20px; padding: 0 2px 0 3px; background: #edecea; border: 1px solid #bec1c4; letter-spacing: -.3px; }
.drill-head { font: 600 13.5px/20px "Open Sans", sans-serif; padding: 12px 0 0 9px; letter-spacing: .1px; }
.opt { padding: 13px 0 0 4px; line-height: 16px; letter-spacing: -.2px; }
.drill-head + .opt { padding-top: 12px; }
.toggle { display: flex; align-items: center; gap: 4px; padding: 8px 0 0 12px; height: 29px; }
.toggle.last { height: 24px; padding-top: 7px; line-height: 14px; }

/* fields */
.fields .pane-head span { letter-spacing: -.3px; }
.search { display: flex; align-items: center; gap: 7px; height: 28px; margin: 2px 4px 0 3px; padding-left: 10px; background: #fff; border: 1px solid #bec1c4; }
.tree { margin-top: 3px; padding-top: 8px; border-top: 1px solid #dcdfdb; }
.table-row { display: flex; align-items: center; height: 24px; margin-bottom: 4px; padding: 0 0 1px 5px; background: #cfd2d0; letter-spacing: -.2px; -webkit-text-stroke: .25px #312d2f; }
.table-row svg + svg { margin: 6px 5px 0 5px; }
.field { display: grid; grid-template-columns: 18px 15px 19px 1fr; align-items: center; height: 22px; margin: 0 5px 0 4px; padding-left: 7px; letter-spacing: -.25px; }
.field > svg { width: 12px; height: 12px; }
.field em { width: 11px; height: 11px; border: 1px solid #7f6d83; border-radius: 2px; }
.field em.on { display: flex; align-items: center; justify-content: center; border-color: #ec9783; background: #ec9783; }
.field em.on::after { content: ""; width: 6px; height: 3px; border: solid #312d2f; border-width: 0 0 1px 1px; transform: rotate(-45deg); margin-top: -2px; }
.picked { background: #cfd2d0; }

.status { padding: 3px 0 0 4px; font-size: 9.5px; letter-spacing: 0; }

/* taskbar */
.taskbar { display: grid; grid-template-columns: 44px 313px 315px 1fr; background: #312d2f; color: #f3f1f0; }
.start { display: flex; align-items: center; justify-content: center; }
.task-search { display: flex; align-items: center; gap: 10px; padding-left: 10px; background: #f3f1f0; color: #312d2f; border: 1px solid #bec1c4; border-width: 1px 0; font-size: 13.5px; letter-spacing: -.25px; }
.task-icons { display: flex; }
.task-icons span { width: 45.2px; display: flex; align-items: center; justify-content: center; background: linear-gradient(#ec9783, #ec9783) center bottom / 37px 0 no-repeat; }
.task-icons span:nth-child(-n+2) { padding-right: 2px; }
.task-icons .run { background-size: 37px 3px; }
.task-icons .current { background: linear-gradient(#ec9783, #ec9783) center bottom / 100% 3px no-repeat, #554b57; }
.tray { display: flex; align-items: center; padding-left: 447px; font-size: 10.5px; }
.tray svg { margin-right: 7.3px; }
.tray svg:nth-child(1) { margin-right: 9px; }
.tray svg:nth-child(2) { margin-right: 10px; }
.lang { width: 22px; margin-left: 4px; letter-spacing: -.2px; }
.clock { width: 58px; margin-left: 10px; text-align: center; line-height: 16px; letter-spacing: 0; }
.notify { margin-left: 15px; }
.q { font: bold 13px "Open Sans", sans-serif; fill: #fff; }
.badge { font: 9px "Open Sans", sans-serif; fill: #fff; }
```
